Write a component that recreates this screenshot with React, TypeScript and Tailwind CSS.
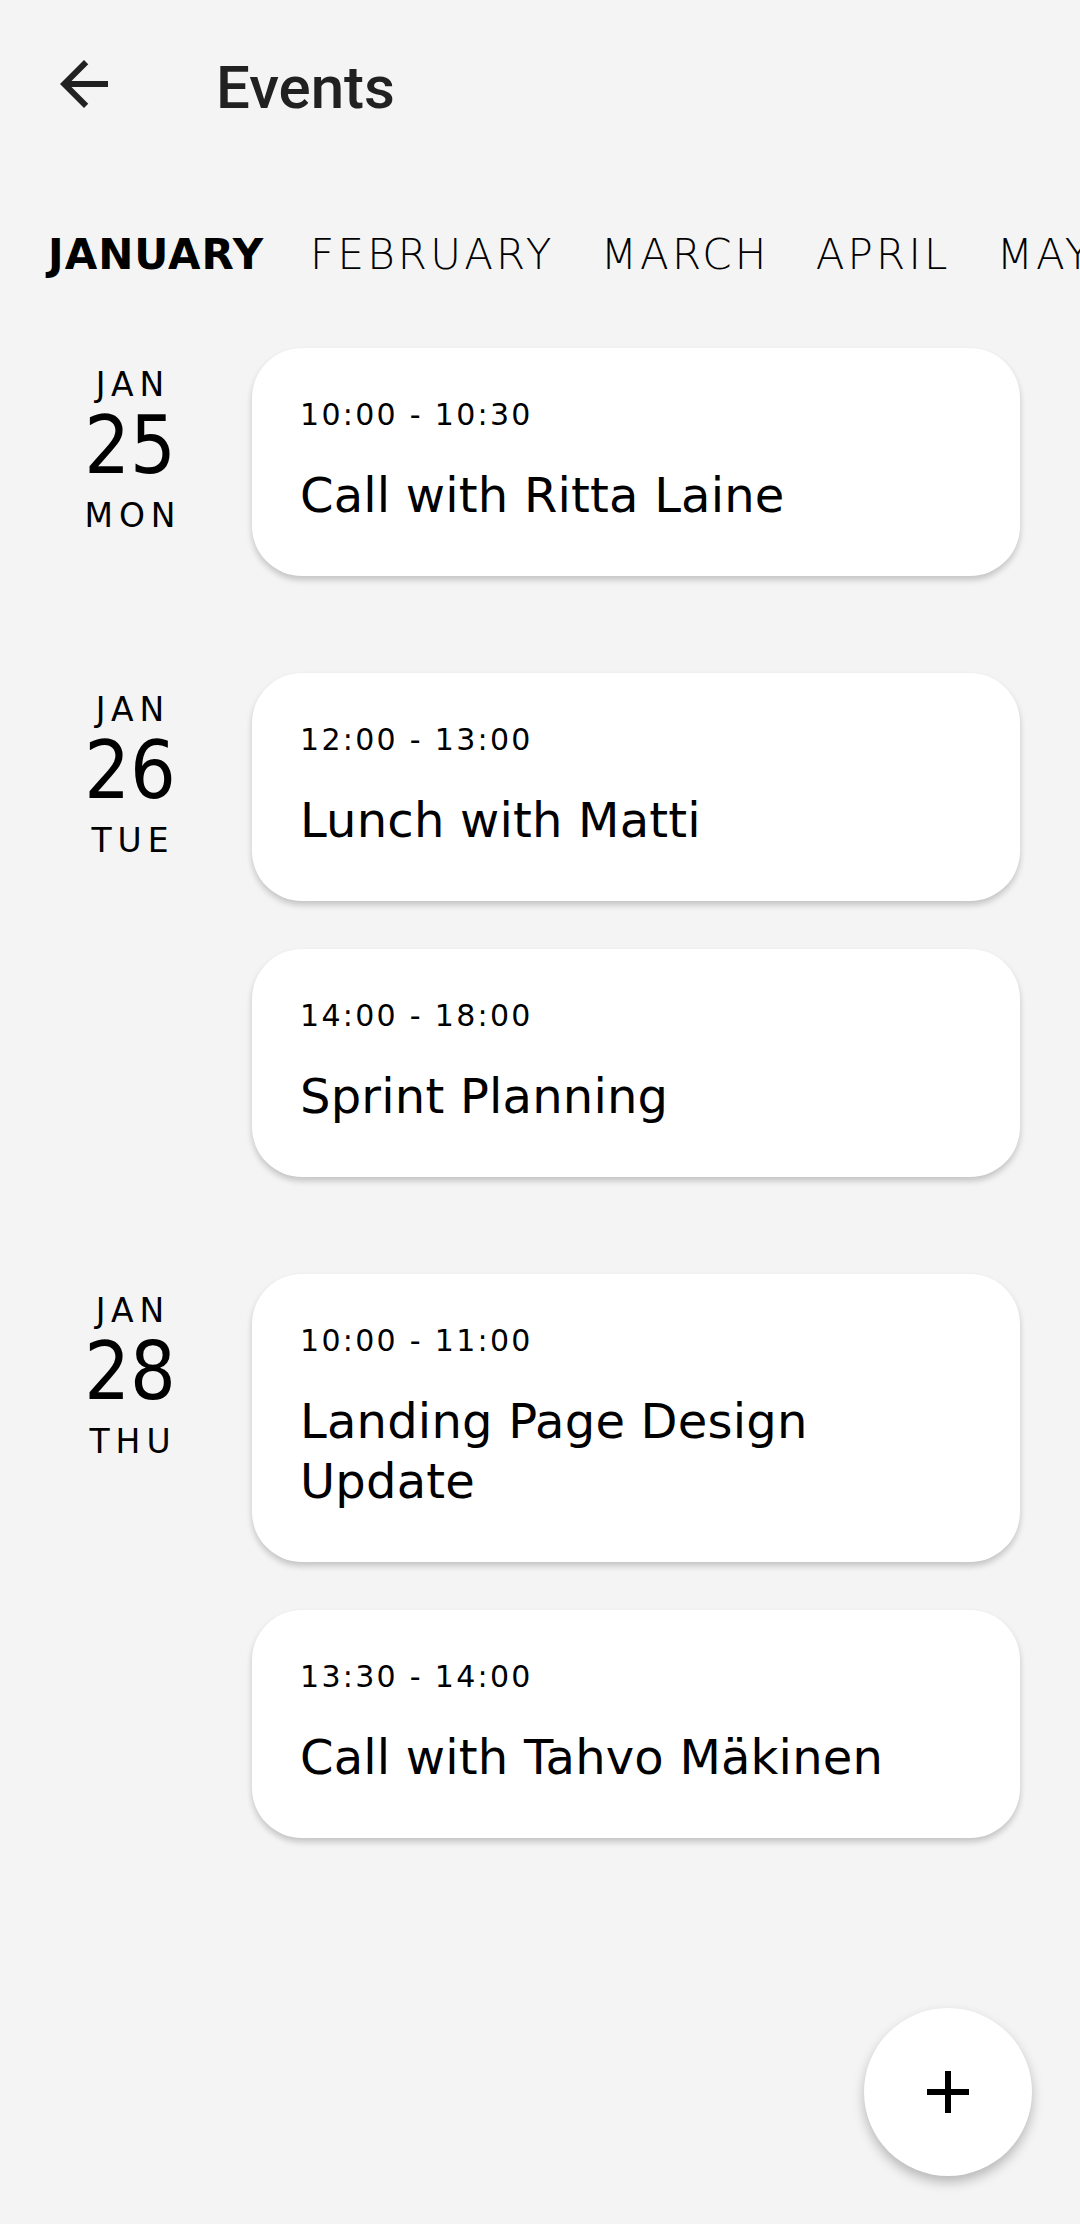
import React from 'react';

interface EventItem {
  time: string;
  title: string;
}

interface DayGroup {
  month: string;
  day: string;
  weekday: string;
  items: EventItem[];
}

const months = ['JANUARY', 'FEBRUARY', 'MARCH', 'APRIL', 'MAY', 'JUNE'];

const days: DayGroup[] = [
  { month: 'JAN', day: '25', weekday: 'MON', items: [{ time: '10:00 - 10:30', title: 'Call with Ritta Laine' }] },
  {
    month: 'JAN',
    day: '26',
    weekday: 'TUE',
    items: [
      { time: '12:00 - 13:00', title: 'Lunch with Matti' },
      { time: '14:00 - 18:00', title: 'Sprint Planning' },
    ],
  },
  {
    month: 'JAN',
    day: '28',
    weekday: 'THU',
    items: [
      { time: '10:00 - 11:00', title: 'Landing Page Design Update' },
      { time: '13:30 - 14:00', title: 'Call with Tahvo Mäkinen' },
    ],
  },
];

const sans = "font-['DejaVu_Sans',sans-serif]";

const EventCard: React.FC<{ item: EventItem }> = ({ item }) => (
  <div className="rounded-[50px] bg-white pl-[48px] pr-[48px] pt-[49px] pb-[51px] shadow-[0_4px_6px_rgba(0,0,0,0.2)]">
    <div className={`${sans} text-[30px] leading-[36px] tracking-[2.3px] text-black`}>{item.time}</div>
    <div className={`${sans} mt-[32px] text-[48px] leading-[60px] tracking-[0.2px] text-black`}>{item.title}</div>
  </div>
);

const DayRow: React.FC<{ group: DayGroup }> = ({ group }) => (
  <div className="flex gap-[40px]">
    <div className="flex w-[164px] shrink-0 flex-col items-center pt-[17px] text-black">
      <span className={`${sans} pl-[6px] text-[33px] leading-[40px] tracking-[6px]`}>{group.month}</span>
      <span className="mt-[11px] font-['Liberation_Sans_Narrow','DejaVu_Sans_Condensed','Roboto',sans-serif] text-[80px] leading-[60px] font-light">
        {group.day}
      </span>
      <span className={`${sans} mt-[20px] pl-[6px] text-[33px] leading-[40px] tracking-[6px]`}>{group.weekday}</span>
    </div>
    <div className="flex flex-1 flex-col gap-[48px]">
      {group.items.map((item) => (
        <EventCard key={item.time + item.title} item={item} />
      ))}
    </div>
  </div>
);

export default function App() {
  return (
    <div className="relative h-[2224px] w-[1080px] overflow-hidden bg-[#f4f4f4]">
      <header className="flex h-[168px] items-center">
        <button className="ml-[48px] flex h-[72px] w-[72px] items-center justify-center">
          <svg width="72" height="72" viewBox="0 0 24 24" fill="#212121">
            <path d="M20 11H7.83l5.59-5.59L12 4l-8 8 8 8 1.41-1.41L7.83 13H20v-2z" />
          </svg>
        </button>
        <h1 className="ml-[96px] pt-[7px] font-['Roboto',sans-serif] text-[60px] leading-[70px] font-medium text-[#212121]">
          Events
        </h1>
      </header>

      <nav className="mt-[62px] flex gap-[46px] overflow-hidden whitespace-nowrap pl-[48px]">
        {months.map((m, i) => (
          <span
            key={m}
            className={
              i === 0
                ? `${sans} shrink-0 text-[42px] leading-[49px] font-bold tracking-[1px] text-black`
                : `${sans} shrink-0 text-[42px] leading-[49px] font-extralight tracking-[3.2px] text-black`
            }
          >
            {m}
          </span>
        ))}
      </nav>

      <main className="mt-[69px] flex flex-col gap-[97px] pl-[48px] pr-[60px]">
        {days.map((g) => (
          <DayRow key={g.day} group={g} />
        ))}
      </main>

      <button className="absolute right-[48px] bottom-[48px] flex h-[168px] w-[168px] items-center justify-center rounded-full bg-white shadow-[0_6px_12px_rgba(0,0,0,0.25)]">
        <svg width="72" height="72" viewBox="0 0 24 24" fill="#000">
          <path d="M19 13h-6v6h-2v-6H5v-2h6V5h2v6h6v2z" />
        </svg>
      </button>
    </div>
  );
}
